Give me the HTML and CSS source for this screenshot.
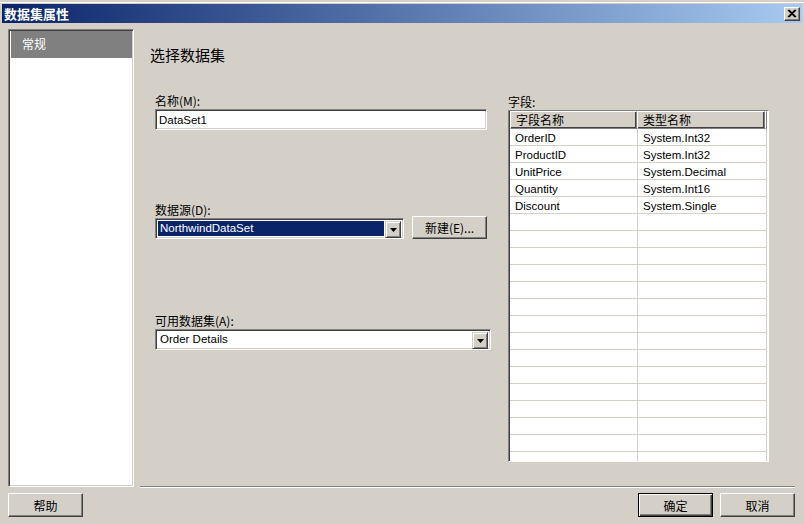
FILE: index.html
```html
<!DOCTYPE html>
<html>
<head>
<meta charset="utf-8">
<link rel="stylesheet" href="styles.css">
</head>
<body>
<div class="window">
  <div class="titlebar">
    <span class="title">数据集属性</span>
    <span class="close"><svg width="10" height="9" viewBox="0 0 10 9"><path d="M1 1 L8 8 M2 1 L9 8 M8 1 L1 8 M9 1 L2 8" stroke="#000" stroke-width="1.2" fill="none"/></svg></span>
  </div>
  <div class="main">
    <div class="nav">
      <div class="nav-item">常规</div>
    </div>
    <div class="content">
      <div class="heading">选择数据集</div>
      <div class="columns">
        <div class="form">
          <div class="label">名称(M):</div>
          <div class="input">DataSet1</div>
          <div class="label gap1">数据源(D):</div>
          <div class="row">
            <div class="select short"><span class="sel-text selected">NorthwindDataSet</span><span class="arrow"><svg width="7" height="4" viewBox="0 0 7 4"><path d="M0 0 H7 L3.5 4 Z" fill="#000"/></svg></span></div>
            <div class="button newbtn">新建(E)...</div>
          </div>
          <div class="label gap2">可用数据集(A):</div>
          <div class="select wide"><span class="sel-text">Order Details</span><span class="arrow"><svg width="7" height="4" viewBox="0 0 7 4"><path d="M0 0 H7 L3.5 4 Z" fill="#000"/></svg></span></div>
        </div>
        <div class="fields">
          <div class="label">字段:</div>
          <div class="grid">
            <div class="ghead"><div class="hcell">字段名称</div><div class="hcell">类型名称</div><div class="hfill"></div></div>
            <div class="grow"><div class="c1">OrderID</div><div class="c2">System.Int32</div></div>
            <div class="grow"><div class="c1">ProductID</div><div class="c2">System.Int32</div></div>
            <div class="grow"><div class="c1">UnitPrice</div><div class="c2">System.Decimal</div></div>
            <div class="grow"><div class="c1">Quantity</div><div class="c2">System.Int16</div></div>
            <div class="grow"><div class="c1">Discount</div><div class="c2">System.Single</div></div>
            <div class="grow"><div class="c1"></div><div class="c2"></div></div>
            <div class="grow"><div class="c1"></div><div class="c2"></div></div>
            <div class="grow"><div class="c1"></div><div class="c2"></div></div>
            <div class="grow"><div class="c1"></div><div class="c2"></div></div>
            <div class="grow"><div class="c1"></div><div class="c2"></div></div>
            <div class="grow"><div class="c1"></div><div class="c2"></div></div>
            <div class="grow"><div class="c1"></div><div class="c2"></div></div>
            <div class="grow"><div class="c1"></div><div class="c2"></div></div>
            <div class="grow"><div class="c1"></div><div class="c2"></div></div>
            <div class="grow"><div class="c1"></div><div class="c2"></div></div>
            <div class="grow"><div class="c1"></div><div class="c2"></div></div>
            <div class="grow"><div class="c1"></div><div class="c2"></div></div>
            <div class="grow"><div class="c1"></div><div class="c2"></div></div>
            <div class="grow"><div class="c1"></div><div class="c2"></div></div>
            <div class="grow"><div class="c1"></div><div class="c2"></div></div>
            <div class="grow"><div class="c1"></div><div class="c2"></div></div>
          </div>
        </div>
      </div>
    </div>
  </div>
  <div class="footer">
    <div class="button">帮助</div>
    <div class="spacer"></div>
    <div class="button default">确定</div>
    <div class="button">取消</div>
  </div>
</div>
</body>
</html>
```

FILE: styles.css
```css
* { box-sizing: border-box; }
html, body { margin: 0; padding: 0; }
body {
  width: 804px;
  height: 524px;
  overflow: hidden;
  background: #d4d0c8;
  font-family: "Liberation Sans", "Noto Sans CJK SC", sans-serif;
  font-size: 11.5px;
  color: #000;
}
.window {
  width: 804px;
  height: 524px;
  border-top: 1px solid #d4d0c8;
  box-shadow: inset 0 1px 0 #d4d0c8, inset 0 2px 0 #fff;
  padding-top: 3px;
  display: flex;
  flex-direction: column;
}
.titlebar {
  margin: 0 2px;
  height: 19px;
  background: linear-gradient(to right, #0a246a, #a6caf0);
  display: flex;
  align-items: center;
  justify-content: space-between;
  padding: 0 2px;
}
.title {
  color: #fff;
  font-weight: bold;
  font-size: 13px;
  font-family: "Noto Sans CJK SC", sans-serif;
}
.close {
  width: 16px;
  height: 14px;
  background: #d4d0c8;
  border: 1px solid;
  border-color: #fff #404040 #404040 #fff;
  box-shadow: inset -1px -1px 0 #808080;
  display: flex;
  align-items: center;
  justify-content: center;
}
.main {
  display: flex;
  padding: 6px 0 0 8px;
  height: 464px;
}
.nav {
  width: 126px;
  height: 458px;
  background: #fff;
  border: 1px solid;
  border-color: #808080 #fff #fff #808080;
  box-shadow: inset 1px 1px 0 #404040, inset -1px -1px 0 #d4d0c8;
  padding: 1px 1px 0 2px;
}
.nav-item {
  height: 27px;
  background: #808080;
  color: #fff;
  padding-left: 11px;
  line-height: 26px;
  font-family: "Noto Sans CJK SC", sans-serif;
  font-size: 12px;
}
.content {
  flex: 1;
  margin-left: 6px;
  margin-right: 9px;
  border-bottom: 1px solid #808080;
  box-shadow: 0 1px 0 #fff;
  height: 458px;
}
.heading {
  margin: 16px 0 0 10px;
  font-size: 15px;
  line-height: 20px;
  font-family: "Noto Sans CJK SC", sans-serif;
}
.columns {
  display: flex;
  margin-top: 28px;
  padding-left: 15px;
}
.form { width: 337px; }
.label {
  height: 16px;
  line-height: 16px;
  font-size: 12px;
  font-family: "Noto Sans CJK SC", "Liberation Sans", sans-serif;
}
.gap1 { margin-top: 72px; }
.gap2 { margin-top: 74px; }
.input, .select {
  height: 21px;
  background: #fff;
  border: 1px solid;
  border-color: #808080 #fff #fff #808080;
  box-shadow: inset 1px 1px 0 #404040, inset -1px -1px 0 #d4d0c8;
  line-height: 16px;
}
.input { width: 332px; padding: 2px 2px 0 3px; }
.row {
  display: flex;
  align-items: flex-start;
}
.select {
  display: flex;
  justify-content: space-between;
  padding: 2px;
}
.select.short { width: 249px; }
.select.wide { width: 336px; }
.sel-text {
  padding: 0 2px;
  line-height: 15px;
  height: 15px;
}
.sel-text.selected {
  background: #0a246a;
  color: #fff;
  flex: 1;
  margin-right: 1px;
}
.arrow {
  width: 16px;
  height: 17px;
  background: #d4d0c8;
  border: 1px solid;
  border-color: #d4d0c8 #404040 #404040 #d4d0c8;
  box-shadow: inset 1px 1px 0 #fff, inset -1px -1px 0 #808080;
  display: flex;
  align-items: center;
  justify-content: center;
}
.button {
  width: 75px;
  height: 24px;
  background: #d4d0c8;
  border: 1px solid;
  border-color: #fff #404040 #404040 #fff;
  box-shadow: inset -1px -1px 0 #808080;
  display: flex;
  align-items: center;
  justify-content: center;
  font-family: "Noto Sans CJK SC", "Liberation Sans", sans-serif;
  font-size: 12px;
}
.newbtn {
  height: 23px;
  margin-left: 8px;
  margin-top: -2px;
}
.fields {
  margin-left: 16px;
  width: 261px;
}
.fields .label { margin-top: 1px; }
.grid {
  width: 261px;
  height: 352px;
  background: #fff;
  border: 1px solid;
  border-color: #808080 #fff #fff #808080;
  box-shadow: inset 1px 0 0 #404040;
  overflow: hidden;
  padding: 0 1px;
}
.ghead {
  display: flex;
  height: 18px;
}
.hcell, .hfill {
  background: #d4d0c8;
  border: 1px solid;
  border-color: #fff #808080 #808080 #fff;
  box-shadow: inset -1px -1px 0 #404040;
  line-height: 15px;
  padding-left: 5px;
  font-family: "Noto Sans CJK SC", sans-serif;
  font-size: 12px;
}
.hcell:first-child { width: 128px; }
.hcell:nth-child(2) { width: 129px; }
.hfill { flex: 1; padding: 0; }
.grow {
  display: flex;
  height: 17px;
  border-bottom: 1px solid #d4d0c8;
}
.c1, .c2 {
  line-height: 15px;
  padding: 2px 0 0 5px;
}
.c1 { width: 128px; border-right: 1px solid #d4d0c8; }
.c2 { width: 129px; border-right: 1px solid #d4d0c8; }
.footer {
  display: flex;
  padding: 6px 9px 0 8px;
  gap: 7px;
}
.spacer { flex: 1; }
.button.default {
  border: 1px solid #000;
  box-shadow: inset 1px 1px 0 #fff, inset -1px -1px 0 #404040, inset -2px -2px 0 #808080;
}
```
